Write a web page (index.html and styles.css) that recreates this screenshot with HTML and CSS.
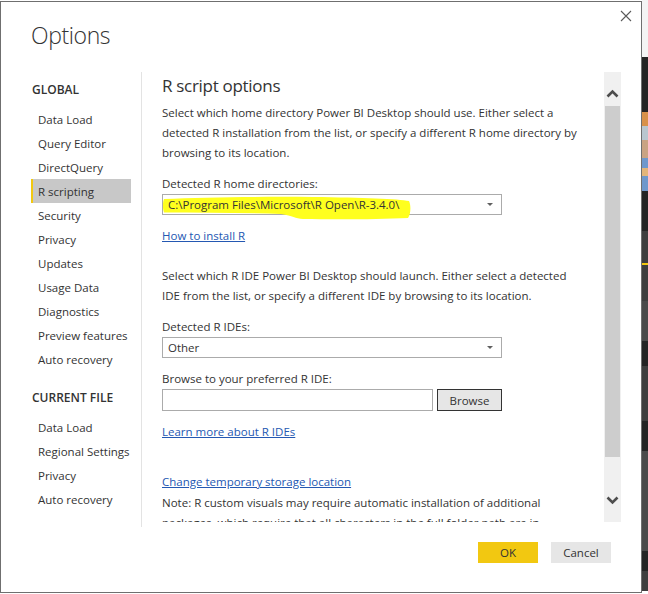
FILE: index.html
```html
<!DOCTYPE html>
<html>
<head>
  <title>Options</title>
  <link rel="stylesheet" href="styles.css">
</head>
<body>
  <div class="screen">
    <div class="dialog">
      <button class="close" aria-label="Close">
        <svg width="12" height="12" viewBox="0 0 12 12"><path d="M1 1 L11 11 M11 1 L1 11" stroke="#5a5a5a" stroke-width="1.1" fill="none"/></svg>
      </button>
      <h1 class="title">Options</h1>

      <div class="main">
        <nav class="nav">
          <h2>GLOBAL</h2>
          <a>Data Load</a>
          <a>Query Editor</a>
          <a>DirectQuery</a>
          <a class="active">R scripting</a>
          <a>Security</a>
          <a>Privacy</a>
          <a>Updates</a>
          <a>Usage Data</a>
          <a>Diagnostics</a>
          <a>Preview features</a>
          <a>Auto recovery</a>
          <h2 class="second">CURRENT FILE</h2>
          <a>Data Load</a>
          <a>Regional Settings</a>
          <a>Privacy</a>
          <a>Auto recovery</a>
        </nav>

        <div class="pane">
          <div class="scroll">
            <h3>R script options</h3>
            <p class="intro">Select which home directory Power BI Desktop should use. Either select a detected R installation from the list, or specify a different R home directory by browsing to its location.</p>

            <label class="label">Detected R home directories:</label>
            <div class="select">
              <svg class="marker" width="248" height="24" viewBox="0 0 248 24"><path d="M1 3 C40 1.5 90 0.5 150 1 C200 1.5 235 3 246 5 C248 9 248 18 245 22 C215 23.5 170 23.5 140 23 C132 22.5 130 20 118 18 C80 16.5 40 17 1 16.5 C-0.5 12 -0.5 7 1 3 Z" fill="#ffff1e"/></svg>
              <span class="value">C:\Program Files\Microsoft\R Open\R-3.4.0\</span>
              <span class="caret"></span>
            </div>
            <a class="link first">How to install R</a>

            <p class="intro second">Select which R IDE Power BI Desktop should launch. Either select a detected IDE from the list, or specify a different IDE by browsing to its location.</p>

            <label class="label">Detected R IDEs:</label>
            <div class="select">
              <span class="value">Other</span>
              <span class="caret"></span>
            </div>

            <label class="label">Browse to your preferred R IDE:</label>
            <div class="browse-row">
              <input class="path" type="text">
              <button class="browse">Browse</button>
            </div>
            <a class="link">Learn more about R IDEs</a>

            <a class="link storage">Change temporary storage location</a>
            <p class="note">Note: R custom visuals may require automatic installation of additional packages, which require that all characters in the full folder path are in<br>English (ASCII) characters.</p>
          </div>

          <div class="scrollbar">
            <svg class="arrow" width="13" height="9" viewBox="0 0 13 9"><path d="M1.5 7.5 L6.5 2.5 L11.5 7.5" stroke="#4d4d4d" stroke-width="2.6" fill="none"/></svg>
            <div class="thumb"></div>
            <svg class="arrow down" width="13" height="9" viewBox="0 0 13 9"><path d="M1.5 1.5 L6.5 6.5 L11.5 1.5" stroke="#4d4d4d" stroke-width="2.6" fill="none"/></svg>
          </div>
        </div>
      </div>

      <div class="footer">
        <button class="btn ok">OK</button>
        <button class="btn">Cancel</button>
      </div>
    </div>

    <div class="backdrop">
      <span class="bg-light"></span>
      <span class="bg-dark h55"></span>
      <span class="bg-orange"></span>
      <span class="bg-sky"></span>
      <span class="bg-skin"></span>
      <span class="bg-blue"></span>
      <span class="bg-sand"></span>
      <span class="bg-blue h15"></span>
      <span class="bg-dark h40"></span>
      <span class="bg-mid h32"></span>
      <span class="bg-yellow"></span>
      <span class="bg-mid h36"></span>
      <span class="bg-grey h40"></span>
      <span class="bg-dark h25"></span>
      <span class="bg-mid h55"></span>
      <span class="bg-dark h30"></span>
      <span class="bg-grey h100"></span>
      <span class="bg-dark h20"></span>
      <span class="bg-mid h20"></span>
    </div>
  </div>
</body>
</html>
```

FILE: styles.css
```css
body {
  margin: 0;
  background-color: #fff;
  font-family: "Open Sans", "Noto Sans", sans-serif;
  font-size: 11.5px;
  color: #333;
}

.screen {
  display: flex;
  height: 594px;
  overflow: hidden;
}

.dialog {
  position: relative;
  box-sizing: border-box;
  width: 642px;
  height: 592px;
  margin-top: 1px;
  border: 1px solid #6f6f6f;
  background-color: #fff;
}

.close {
  position: absolute;
  top: 8px;
  right: 9px;
  padding: 0;
  border: none;
  background: none;
}

.close svg {
  display: block;
}

.title {
  margin: 0;
  padding: 18px 0 0 30px;
  height: 30px;
  font-size: 23px;
  font-weight: 300;
  letter-spacing: -0.4px;
  line-height: 30px;
  color: #333;
}

.main {
  display: flex;
  align-items: flex-start;
  margin-top: 22px;
}

/* left navigation */

.nav {
  display: flex;
  flex-direction: column;
  box-sizing: border-box;
  width: 141px;
  height: 455px;
  padding: 0 10px 0 30px;
  border-right: 1px solid #e3e3e3;
}

.nav h2 {
  margin: 0 0 5px 1px;
  padding-top: 6px;
  font-size: 12px;
  font-weight: 600;
  line-height: 24px;
  color: #333;
}

.nav h2.second {
  margin-top: 9px;
}

.nav a {
  display: block;
  height: 24px;
  padding-left: 5px;
  border-left: 2px solid transparent;
  line-height: 26px;
  color: #333;
  white-space: nowrap;
}

.nav a.active {
  background-color: #c8c8c8;
  border-left-color: #f2c811;
}

/* right pane */

.pane {
  display: flex;
  margin-right: 20px;
}

.scroll {
  box-sizing: border-box;
  width: 462px;
  height: 450px;
  padding: 0 22px 0 20px;
  overflow: hidden;
}

.scroll h3 {
  margin: 2px 0 0;
  font-size: 17px;
  font-weight: 400;
  letter-spacing: -0.3px;
  line-height: 24px;
  color: #333;
}

.intro {
  margin: 5px 0 0;
  line-height: 20px;
}

.intro.second {
  margin-top: 20px;
}

.label {
  display: block;
  margin-top: 11px;
  line-height: 20px;
}

.select {
  position: relative;
  box-sizing: border-box;
  width: 340px;
  height: 21px;
  border: 1px solid #ababab;
}

.marker {
  position: absolute;
  left: 0;
  top: 1px;
}

.select .value {
  position: relative;
  display: block;
  padding-left: 5px;
  line-height: 20px;
}

.caret {
  position: absolute;
  right: 8px;
  top: 8px;
  border-left: 3px solid transparent;
  border-right: 3px solid transparent;
  border-top: 3px solid #606060;
}

.link {
  display: block;
  margin-top: 11px;
  line-height: 20px;
  color: #2458b2;
  text-decoration: underline;
}

.browse-row {
  display: flex;
  gap: 4px;
}

.path {
  box-sizing: border-box;
  width: 271px;
  height: 22px;
  margin: 0;
  border: 1px solid #ababab;
}

.browse {
  box-sizing: border-box;
  width: 65px;
  height: 22px;
  padding: 0;
  border: 1px solid #333;
  background-color: #e6e6e6;
  font-family: inherit;
  font-size: 11.5px;
  color: #333;
}

.link.storage {
  margin-top: 30px;
}

.note {
  margin: 1px 0 0;
  line-height: 20px;
}

.scrollbar {
  display: flex;
  flex-direction: column;
  align-items: center;
  width: 17px;
  height: 450px;
  background-color: #f0f0f0;
}

.arrow {
  display: block;
  margin-top: 17px;
}

.thumb {
  width: 15px;
  height: 351px;
  margin-top: 8px;
  background-color: #cdcdcd;
}

.arrow.down {
  margin-top: 39px;
}

/* footer */

.footer {
  display: flex;
  justify-content: flex-end;
  gap: 13px;
  padding: 15px 30px 0 0;
}

.btn {
  width: 60px;
  height: 21px;
  padding: 0;
  border: none;
  background-color: #e6e6e6;
  font-family: inherit;
  font-size: 11.5px;
  color: #333;
}

.btn.ok {
  background-color: #f2c811;
}

/* application behind the dialog */

.backdrop {
  display: flex;
  flex-direction: column;
  width: 6px;
}

.backdrop span {
  display: block;
  flex: none;
}

.bg-light { height: 57px; background-color: #f4f4f4; }
.bg-dark { background-color: #242424; }
.bg-mid { background-color: #3e3e3e; }
.bg-grey { background-color: #4a4a4a; }
.bg-orange { height: 14px; background-color: #d8914a; }
.bg-sky { height: 14px; background-color: #b9c6cf; }
.bg-skin { height: 18px; background-color: #c9a383; }
.bg-blue { height: 10px; background-color: #6f98cc; }
.bg-sand { height: 8px; background-color: #e2b57a; }
.bg-yellow { height: 2px; background-color: #f2c811; }

.h15 { height: 15px; }
.h20 { height: 20px; }
.h25 { height: 25px; }
.h30 { height: 30px; }
.h32 { height: 32px; }
.h36 { height: 36px; }
.h40 { height: 40px; }
.h55 { height: 55px; }
.h100 { height: 100px; }
```
